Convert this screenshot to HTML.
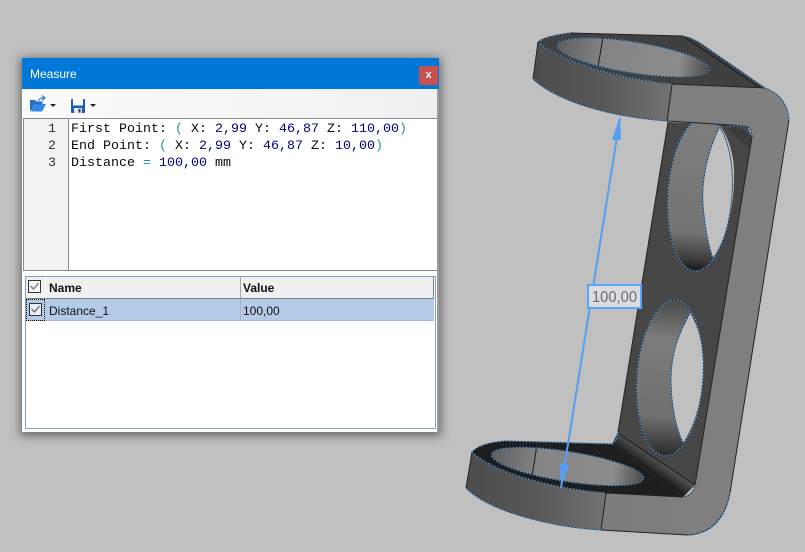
<!DOCTYPE html>
<html><head><meta charset="utf-8">
<style>
html,body{margin:0;padding:0;background:#c0c0c0;width:805px;height:552px;overflow:hidden}
div{position:absolute;box-sizing:border-box}
.s{font-family:"Liberation Sans",sans-serif;font-size:12px;color:#111;white-space:pre}
.m{font-family:"Liberation Mono",monospace;font-size:13.33px;line-height:17px;white-space:pre;color:#0a0a0a}
b.n{font-weight:normal;color:#000080}
i.p{font-style:normal;color:#1a9a9a}
svg{position:absolute;left:0;top:0}
</style></head><body>
<svg width="805" height="552" viewBox="0 0 805 552">
<defs>
<linearGradient id="wall" x1="0" x2="1" y1="0" y2="0"><stop offset="0" stop-color="#4c4c4c"/><stop offset=".5" stop-color="#585858"/><stop offset="1" stop-color="#727272"/></linearGradient>
<linearGradient id="hole" x1="0" x2="1" y1="0" y2="0"><stop offset="0" stop-color="#5e5e5e"/><stop offset=".3" stop-color="#848484"/><stop offset=".8" stop-color="#8c8c8c"/><stop offset="1" stop-color="#4a4a4a"/></linearGradient>
<linearGradient id="strip" x1="0" x2="1" y1="0" y2="0"><stop offset="0" stop-color="#7c7c7c"/><stop offset="1" stop-color="#808080"/></linearGradient>
<linearGradient id="hv1" x1="0" x2="0" y1="0" y2="1"><stop offset="0" stop-color="#7e7e7e"/><stop offset=".75" stop-color="#747474"/><stop offset=".93" stop-color="#3a3a3a"/><stop offset="1" stop-color="#161616"/></linearGradient>
<linearGradient id="hv2" x1="0" x2="0" y1="0" y2="1"><stop offset="0" stop-color="#4a4a4a"/><stop offset=".25" stop-color="#7c7c7c"/><stop offset=".75" stop-color="#707070"/><stop offset="1" stop-color="#2a2a2a"/></linearGradient>
<linearGradient id="bend" gradientUnits="userSpaceOnUse" x1="655" y1="459" x2="648" y2="469"><stop offset="0" stop-color="#505050"/><stop offset=".5" stop-color="#383838"/><stop offset="1" stop-color="#1e1e1e"/></linearGradient>
<g id="holes" fill="none">
<ellipse cx="700" cy="194" rx="32" ry="77" transform="rotate(4 700 194)"/>
<ellipse cx="670" cy="378" rx="33" ry="78" transform="rotate(4 670 378)"/>
<path d="M720,126 C708,150 701,180 703,205 C705,228 708,245 713,258"/>
<path d="M690,313 C678,335 670,355 671,385 C672,410 677,430 683,443"/>
</g>
<g id="edges" fill="none">
<path d="M683,36 Q690,37 700,43 L765,88 Q787,96 789,120"/>
<path d="M570,33 Q545,36 538,42 C555,58 610,78 672,84"/>
<path d="M533,79 C553,98 600,116 667,121"/>
<path d="M730,126 L747,126 Q752,128 752,137"/>
<path d="M472,452 Q480,443 505,441 L612,444"/>
<path d="M472,452 C490,470 545,488 606,493"/>
<path d="M466,488 C485,508 540,526 601,530"/>
<path d="M730,493 Q722,533 688,535"/>
<path d="M695,485 Q693,495 683,497"/>
<path d="M612,444 Q618,440 618,432"/>
<ellipse cx="633.5" cy="57.5" rx="77" ry="15.5" transform="rotate(9 633.5 57.5)"/>
<ellipse cx="567.5" cy="466.5" rx="77" ry="15" transform="rotate(9 567.5 466.5)"/>
</g>
</defs>

<!-- plate -->
<path d="M668,122 L747,126 L752,137 L695,485 L683,497 L612,444 L618,432 L628,370 Z" fill="#464646"/>
<path d="M736,125 L752,137 L750,150 L727,128Z" fill="#3c3c3c"/>

<!-- upper hole -->
<ellipse cx="700" cy="194" rx="32" ry="77" transform="rotate(4 700 194)" fill="url(#hv1)"/>
<path d="M720,126 C708,150 701,180 703,205 C705,228 708,245 713,258 C725,240 735,210 734,170 C733,150 727,135 720,126Z" fill="#c0c0c0"/>
<!-- lower hole -->
<ellipse cx="670" cy="378" rx="33" ry="78" transform="rotate(4 670 378)" fill="url(#hv2)"/>
<path d="M690,313 C678,335 670,355 671,385 C672,410 677,430 683,443 C695,425 704,395 703,360 C702,340 697,325 690,313Z" fill="#c0c0c0"/>
<use href="#holes" stroke="#1f2a33" stroke-width=".8"/>
<use href="#holes" stroke="#4a9ade" stroke-width="1.2" stroke-dasharray="1.5 1.8"/>

<!-- bend band -->
<path d="M619,434 L695,485 L683,497 L612,444 Q618,440 619,434Z" fill="url(#bend)"/>
<path d="M619,434 L695,485" stroke="#1a1a1a" stroke-width="1" fill="none"/>

<!-- top ring -->
<path d="M538,42 Q545,36 570,33 L683,36 Q690,37 700,43 L765,88 L672,84 C610,78 555,58 538,42Z" fill="#404040"/>
<path d="M683,36 L760,88" stroke="#151515" stroke-width="1" fill="none"/>
<path d="M538,42 C555,58 610,78 672,84 L667,121 C600,116 553,98 533,79 Z" fill="url(#wall)"/>
<ellipse cx="633.5" cy="57.5" rx="77" ry="15.5" transform="rotate(9 633.5 57.5)" fill="url(#hole)"/>
<path d="M603,37 L598,67" stroke="#1a1a1a" stroke-width="1" fill="none"/>

<!-- bottom ring -->
<path d="M472,452 Q480,443 505,441 L612,444 L683,497 L606,493 C545,488 490,470 472,452Z" fill="#1e1e1e"/>
<path d="M472,452 C490,470 545,488 606,493 L601,530 C540,526 485,508 466,488 Z" fill="url(#wall)"/>
<ellipse cx="567.5" cy="466.5" rx="77" ry="15" transform="rotate(9 567.5 466.5)" fill="url(#hole)"/>
<path d="M537,445 L532,476" stroke="#1a1a1a" stroke-width="1" fill="none"/>

<!-- strip with bends -->
<path d="M672,84 L765,88 Q787,96 789,120 L730,493 Q722,533 688,535 L601,530 L606,493 L683,497 Q693,495 695,485 L752,137 Q752,128 746,126 L667,121 Z" fill="url(#strip)"/>
<path d="M789,120 L730,493 Q722,533 688,535 L601,530 M667,121 L746,126 Q752,128 752,137 L695,485 M672,84 L667,121 M672,84 L765,88 M606,493 L601,530 M606,493 L683,497" fill="none" stroke="#222" stroke-width="1"/>

<!-- dotted silhouette edges -->
<use href="#edges" stroke="#1f2a33" stroke-width=".8"/>
<use href="#edges" stroke="#4a9ade" stroke-width="1.2" stroke-dasharray="1.5 1.8"/>
<g fill="none" stroke="#222" stroke-width="1">
<path d="M570,33 L683,36"/>
<path d="M538,42 L533,79"/>
<path d="M472,452 L466,488"/>
<path d="M668,122 L618,432"/>
</g>

<!-- dimension -->
<path d="M620,118 L561,488" stroke="#55a0f5" stroke-width="2" fill="none"/>
<path d="M620,116 L612,140 L621,140Z M561,488 L560,463 L569,465Z" fill="#55a0f5"/>
<rect x="588" y="285" width="53" height="23" fill="#dcdcdc" stroke="#5aa5ff" stroke-width="2"/>
<text x="592" y="302" font-family="'Liberation Sans',sans-serif" font-size="16" fill="#6a6a82" textLength="45" lengthAdjust="spacingAndGlyphs">100,00</text>
</svg>

<!-- dialog -->
<div style="left:22px;top:58px;width:417px;height:374px;background:#fff;box-shadow:0 2px 9px 2px rgba(0,0,0,.45)"></div>
<div style="left:22px;top:58px;width:417px;height:31px;background:#0078d7"></div>
<div class="s" style="left:30px;top:67px;color:#fff;font-size:12px">Measure</div>
<div style="left:419px;top:66px;width:19px;height:19px;background:#c75050;color:#fff;font:bold 11px 'Liberation Sans',sans-serif;text-align:center;line-height:18px">x</div>
<div style="left:22px;top:89px;width:415px;height:29px;background:linear-gradient(90deg,#fbfbfb,#f0f0f0)"></div>
<div style="left:437px;top:89px;width:2px;height:343px;background:#9a9a9a"></div>

<svg width="805" height="552" viewBox="0 0 805 552">
<!-- folder -->
<path d="M30,100 h5 l1.5,1.5 h6 v3 h-8 l-3,6 h-1.5 Z" fill="#2a6fc0"/>
<path d="M31,111.5 l4,-7.5 h11 l-4,7.5Z" fill="#2d8ae6"/>
<path d="M38,101 q2,-3.5 6,-3 M42,95.5 l3,2.5 l-3,2.5" fill="none" stroke="#3a8ad8" stroke-width="1.3"/>
<path d="M50,104 h6 l-3,3Z" fill="#222"/>
<!-- save -->
<rect x="71" y="99" width="14" height="14" rx="1" fill="#1c5cb0"/>
<rect x="73" y="99" width="10" height="6.5" fill="#f4f8fc"/>
<rect x="74" y="108" width="8" height="5" fill="#dfe6ee"/>
<rect x="78.5" y="109" width="2" height="3.5" fill="#234"/>
<path d="M90,104 h6 l-3,3Z" fill="#222"/>
</svg>

<!-- editor -->
<div style="left:23px;top:118px;width:414px;height:153px;background:#fff;border:1px solid #8c8c8c;border-width:1px 0 1px 1px"></div>
<div style="left:24px;top:119px;width:45px;height:151px;background:#f2f2f2;border-right:1px solid #8c8c8c"></div>
<div class="m" style="left:24px;top:121px;width:32px;text-align:right;color:#333">1
2
3</div>
<div class="m" style="left:71px;top:121px">First Point: <i class="p">(</i> X: <b class="n">2,99</b> Y: <b class="n">46,87</b> Z: <b class="n">110,00</b><i class="p">)</i>
End Point: <i class="p">(</i> X: <b class="n">2,99</b> Y: <b class="n">46,87</b> Z: <b class="n">10,00</b><i class="p">)</i>
Distance <i class="p">=</i> <b class="n">100,00</b> mm</div>

<!-- table -->
<div style="left:25px;top:276px;width:411px;height:153px;background:#fff;border:1px solid #7fa3c7"></div>
<div style="left:26px;top:277px;width:408px;height:22px;background:#f0f0f0;border-bottom:1px solid #808080;border-right:1px solid #808080"></div>
<div style="left:45px;top:277px;width:1px;height:21px;background:#fff"></div>
<div style="left:240px;top:277px;width:1px;height:21px;background:#a8a8a8"></div>
<div style="left:26px;top:299px;width:408px;height:22px;background:#b4cbe8;border-bottom:1px solid #a9b8c8"></div>
<div style="left:240px;top:299px;width:1px;height:21px;background:#a9b4c0"></div>
<div class="s" style="left:49px;top:281px;font-weight:bold;font-size:12px;line-height:14px">Name</div>
<div class="s" style="left:243px;top:281px;font-weight:bold;font-size:12px;line-height:14px">Value</div>
<div class="s" style="left:49px;top:304px;line-height:14px">Distance_1</div>
<div class="s" style="left:243px;top:304px;line-height:14px">100,00</div>
<div style="left:26px;top:299px;width:19px;height:22px;border:1px dotted #111"></div>
<svg width="805" height="552" viewBox="0 0 805 552">
<rect x="28.5" y="280.5" width="12" height="12" fill="#f6f6f6" stroke="#333"/>
<path d="M30.5,286 l3,3 l5,-6" fill="none" stroke="#777" stroke-width="1.3"/>
<rect x="29.5" y="303.5" width="12" height="12" fill="#e8eff8" stroke="#333"/>
<path d="M31.5,309 l3,3 l5,-6" fill="none" stroke="#666" stroke-width="1.3"/>
</svg>
</body></html>
